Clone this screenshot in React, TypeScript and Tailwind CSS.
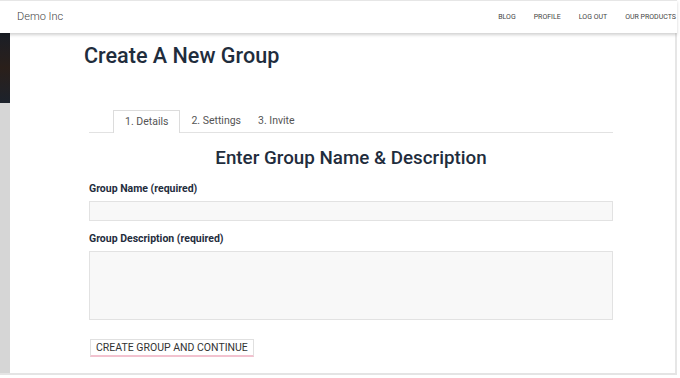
const navItems = ["BLOG", "PROFILE", "LOG OUT", "OUR PRODUCTS"]

const tabs = [
	{ label: "1. Details", className: "h-[23px] px-[11px] flex items-center border border-b-0 border-[#dcdcdc] bg-white -mb-px" },
	{ label: "2. Settings", className: "h-[23px] pl-[11px] pr-[8px] flex items-center" },
	{ label: "3. Invite", className: "h-[23px] pl-[9px] flex items-center" },
]

function Header() {
	return (
		<div className="relative z-10 h-[33px] border-t border-[#e6e6e6] bg-white shadow-[0_2px_3px_rgba(0,0,0,0.18)] flex items-center justify-between pl-[17px] pr-[1px] mr-[3px]">
			<span className="text-[11px] font-light text-[#444]">Demo Inc</span>
			<nav className="flex items-center gap-[18px] text-[7px] text-[#444]">
				{navItems.map((item) => (
					<span key={item}>{item}</span>
				))}
			</nav>
		</div>
	)
}

function Tabs() {
	return (
		<div className="flex items-end h-[23px] border-b border-[#e2e2e2] pl-[24px] text-[10.5px] text-[#555]">
			{tabs.map((tab) => (
				<div key={tab.label} className={tab.className}>
					{tab.label}
				</div>
			))}
		</div>
	)
}

export default function App() {
	return (
		<div className="w-[680px] h-[378px] overflow-hidden bg-white font-['Roboto',sans-serif]">
			<Header />
			<div className="flex h-[342px] border-b-2 border-[#e4e4e4] mr-[3px]">
				<div className="w-[10px] flex flex-col">
					<div className="h-[70px] bg-gradient-to-b from-[#1a1e26] via-[#2a1f1a] to-[#1c222c]" />
					<div className="flex-1 bg-[#d6d6d6]" />
				</div>
				<div className="flex-1 border-r-2 border-[#e6e6e6] pl-[74px] pt-[10px]">
					<h1 className="text-[21.6px] leading-[26px] font-medium text-[#1f2d3d]">Create A New Group</h1>
					<div className="ml-[5px] w-[524px] mt-[41px]">
						<Tabs />
						<h2 className="mt-[14px] text-center text-[18.8px] leading-[22px] font-medium text-[#1f2d3d]">
							Enter Group Name &amp; Description
						</h2>
						<label className="block mt-[13px] text-[10.5px] leading-[14px] font-bold text-[#1f2d3d]">
							Group Name (required)
						</label>
						<input
							type="text"
							className="block mt-[5px] w-full h-[20px] bg-[#f8f8f8] border border-[#e2e2e2] outline-none"
						/>
						<label className="block mt-[11px] text-[10.5px] leading-[14px] font-bold text-[#1f2d3d]">
							Group Description (required)
						</label>
						<textarea className="block mt-[5px] w-full h-[69px] resize-none bg-[#f8f8f8] border border-[#e2e2e2] outline-none" />
						<button className="mt-[19px] ml-px h-[18px] px-[5px] bg-white border border-[#e0e0e0] border-b-2 border-b-[#f2c2cf] text-[10.5px] leading-[14px] text-[#333]">
							CREATE GROUP AND CONTINUE
						</button>
					</div>
				</div>
			</div>
		</div>
	)
}
